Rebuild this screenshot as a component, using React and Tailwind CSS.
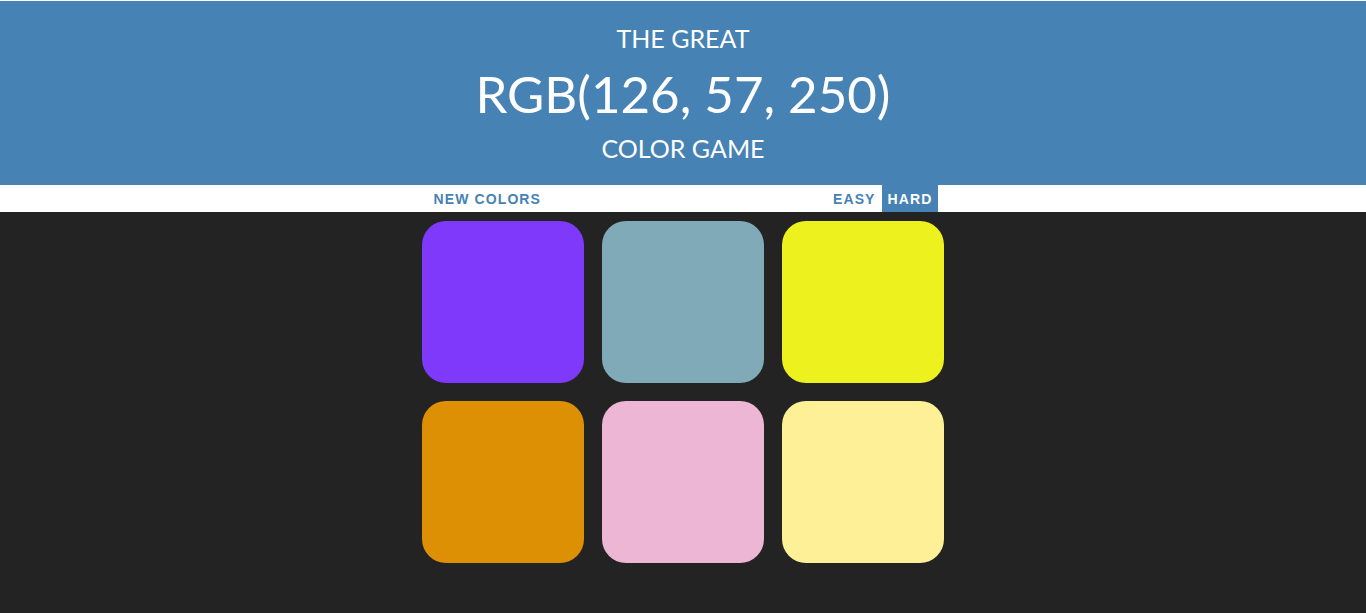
import React, { useState } from 'react';

const colors = [
  '#7e39fa',
  '#81aab8',
  '#edf21e',
  '#dd9003',
  '#ecb6d4',
  '#fef097',
];

export default function App() {
  const [mode, setMode] = useState('hard');

  return (
    <div className="min-h-[613px] bg-[#232323]" style={{ fontFamily: 'Lato, sans-serif' }}>
      {/* Header */}
      <div className="mt-px h-[184px] bg-[#4682b4] text-white flex flex-col items-center font-[Lato,sans-serif]">
        <div className="mt-[21px] text-[25px] leading-[32px]">THE GREAT</div>
        <div className="mt-[10px] text-[51px] leading-[60px]">RGB(126, 57, 250)</div>
        <div className="mt-[8px] text-[25px] leading-[32px]">COLOR GAME</div>
      </div>

      {/* Stripe */}
      <div className="h-[27px] bg-white flex justify-center font-['Liberation_Sans',Arial,sans-serif]">
        <button className="h-full px-[6px] pt-[2px] text-[14px] font-bold tracking-[1.1px] uppercase text-[#4682b4]">
          New Colors
        </button>
        <span className="w-[280px]"></span>
        <button
          onClick={() => setMode('easy')}
          className={`h-full px-[6px] pt-[2px] text-[14px] font-bold tracking-[1.1px] uppercase ${mode === 'easy' ? 'bg-[#4682b4] text-white' : 'text-[#4682b4]'}`}
        >
          Easy
        </button>
        <button
          onClick={() => setMode('hard')}
          className={`h-full px-[6px] pt-[2px] text-[14px] font-bold tracking-[1.1px] uppercase ${mode === 'hard' ? 'bg-[#4682b4] text-white' : 'text-[#4682b4]'}`}
        >
          Hard
        </button>
      </div>

      {/* Squares */}
      <div className="w-[540px] mx-auto pt-[9px] grid grid-cols-3 gap-[18px] px-[9px]">
        {colors.map((c) => (
          <div key={c} className="w-[162px] h-[162px] rounded-[24px]" style={{ backgroundColor: c }}></div>
        ))}
      </div>
    </div>
  );
}
